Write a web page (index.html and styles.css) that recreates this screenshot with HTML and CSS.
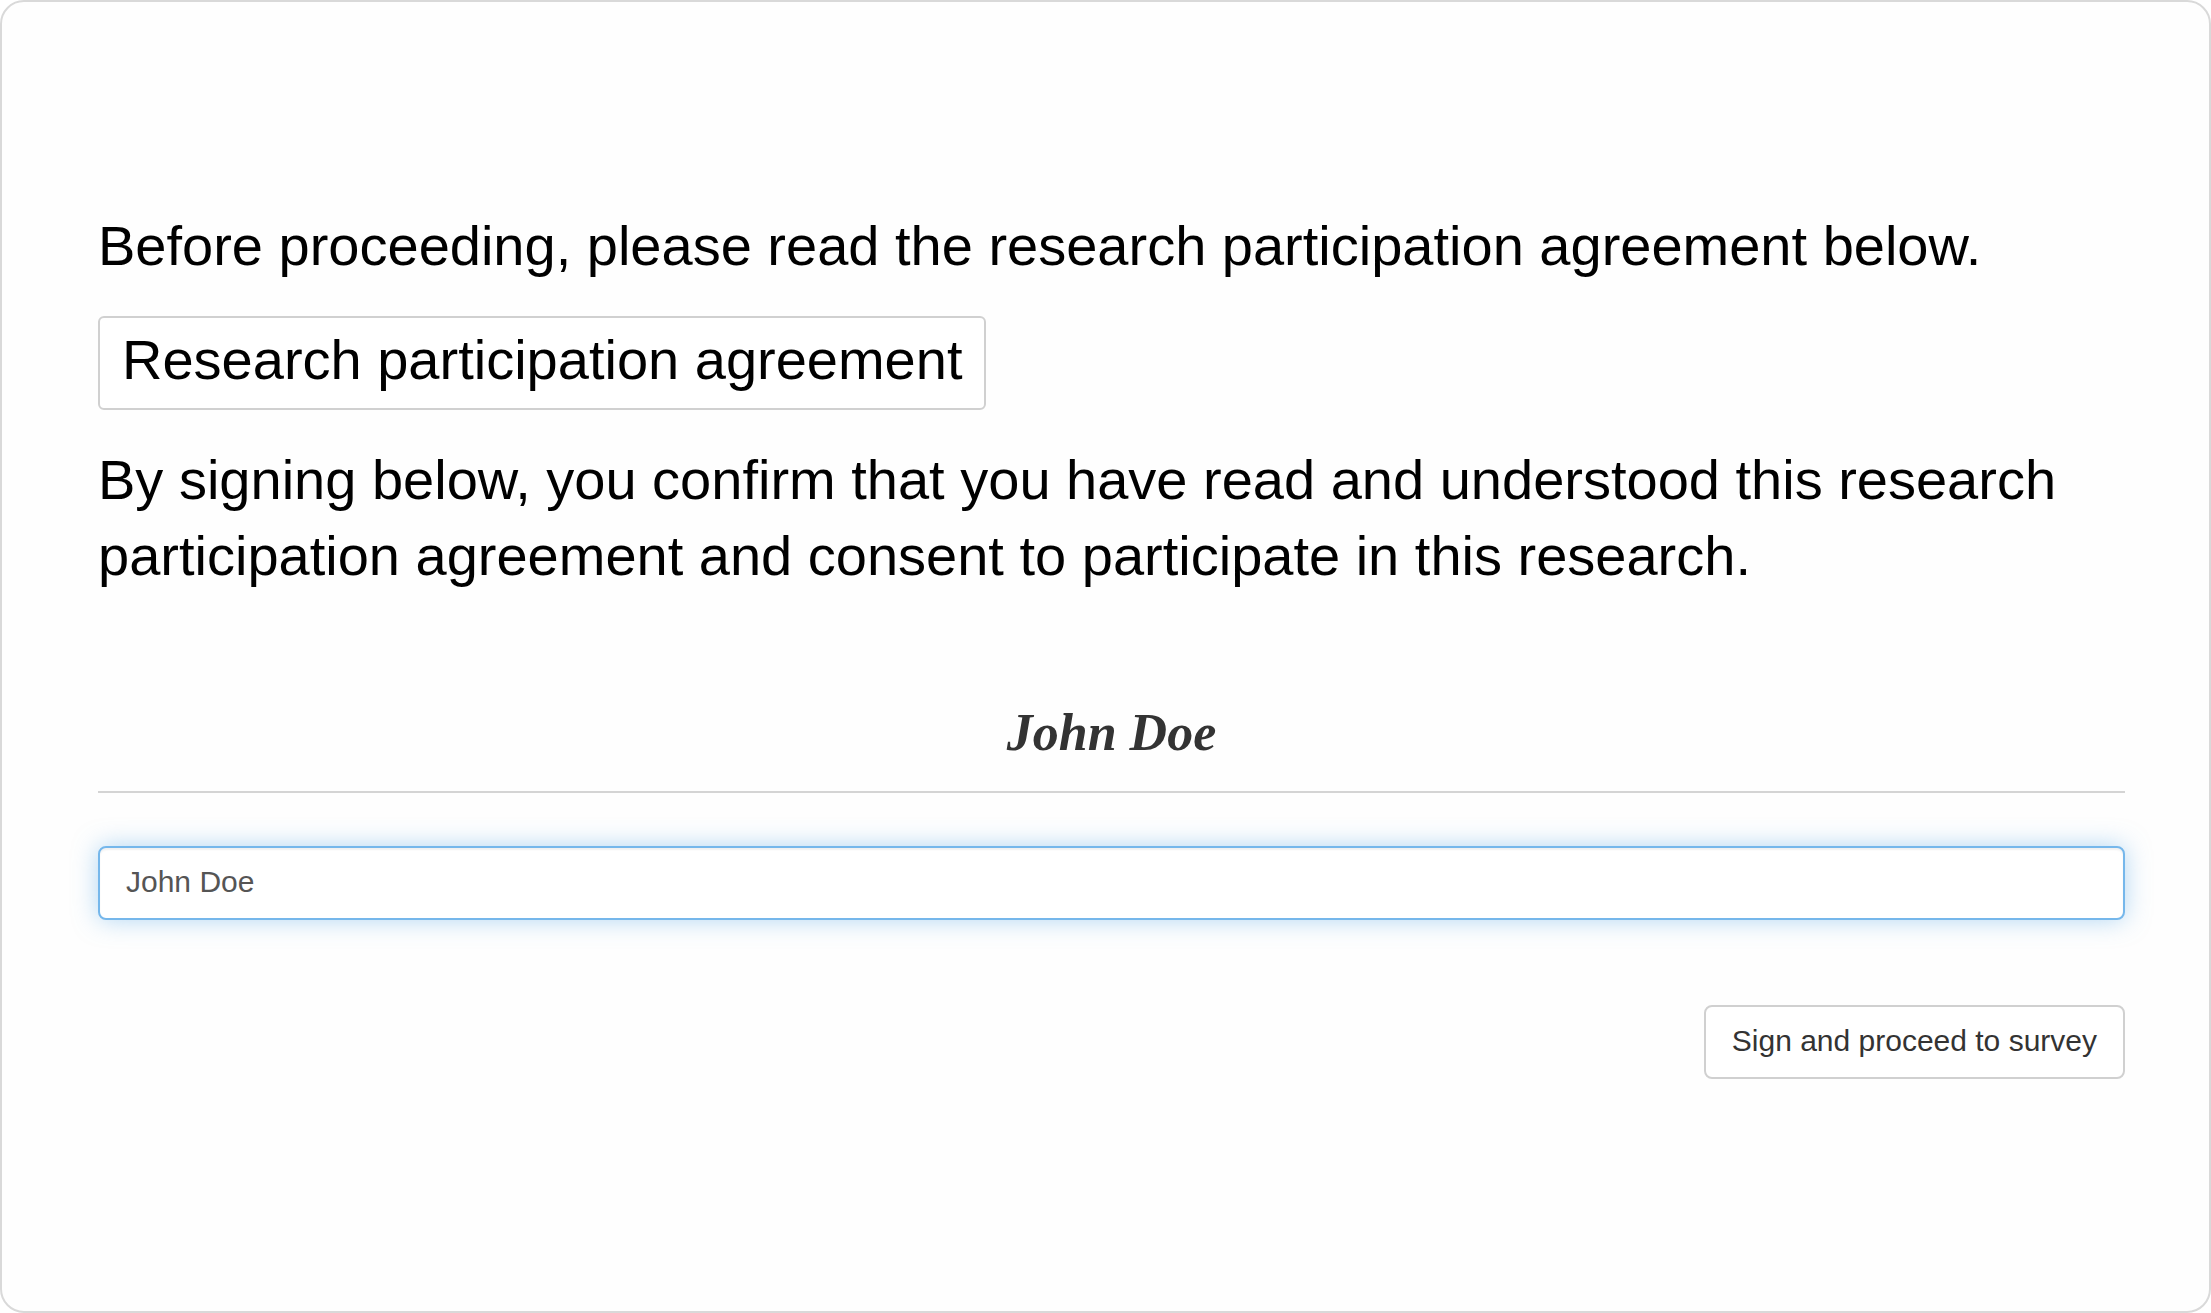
FILE: index.html
```html
<!DOCTYPE html>
<html lang="en">
<head>
<meta charset="utf-8">
<meta name="viewport" content="width=device-width, initial-scale=1">
<title>Research participation agreement</title>
<link rel="stylesheet" href="styles.css">
</head>
<body>
<main class="consent">
  <p class="copy">Before proceeding, please read the research participation agreement below.</p>
  <button type="button" class="agreement">Research participation agreement</button>
  <p class="copy">By signing below, you confirm that you have read and understood this research participation agreement and consent to participate in this research.</p>
  <form class="sign-form">
    <output class="signature" for="full-name">John Doe</output>
    <input class="name-field" id="full-name" type="text" value="John Doe" aria-label="Full name">
    <button type="submit" class="submit">Sign and proceed to survey</button>
  </form>
</main>
</body>
</html>
```

FILE: styles.css
```css
* {
  box-sizing: border-box;
}

body {
  margin: 0;
  background: #fff;
  color: #000;
  font-family: "Liberation Sans", Arial, sans-serif;
}

.consent {
  display: flex;
  flex-direction: column;
  align-items: flex-start;
  gap: 32px;
  min-height: 100vh;
  padding: 206px 84px 96px 96px;
  border: 2px solid #d9d9d9;
  border-radius: 24px;
  background: #fefefe;
}

.copy {
  margin: 0;
  font-size: 56px;
  line-height: 76px;
}

.agreement,
.submit,
.name-field {
  border: 2px solid #d0d0d0;
  background: #fff;
  font-family: inherit;
}

.agreement {
  padding: 4px 22px 10px;
  border-radius: 6px;
  color: #000;
  font-size: 56px;
  line-height: 76px;
}

.sign-form {
  display: flex;
  flex-direction: column;
  align-self: stretch;
}

.signature {
  padding: 69px 0 20px;
  border-bottom: 2px solid #d4d4d4;
  color: #333;
  font-family: "Brush Script MT", "Brush Script Std", "Liberation Serif", cursive;
  font-size: 52px;
  font-style: italic;
  font-weight: 700;
  line-height: 76px;
  text-align: center;
}

.name-field {
  margin-top: 53px;
  padding: 17px 26px 19px;
  border-color: #75b7eb;
  border-radius: 8px;
  outline: 0;
  box-shadow: inset 0 2px 2px rgba(0, 0, 0, 0.06), 0 0 24px rgba(102, 175, 233, 0.5);
  color: #555;
  font-size: 30px;
  line-height: 34px;
}

.submit {
  align-self: flex-end;
  margin-top: 85px;
  padding: 17px 26px 19px;
  border-radius: 8px;
  color: #333;
  font-size: 30px;
  line-height: 34px;
}
```
